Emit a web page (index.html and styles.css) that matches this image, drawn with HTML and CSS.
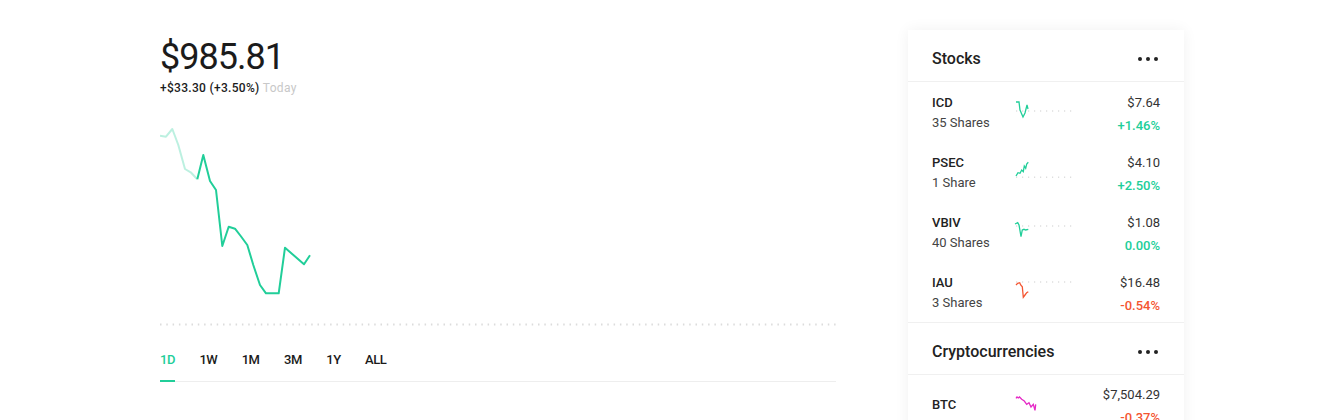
FILE: index.html
```html
<!DOCTYPE html>
<html lang="en">
<head>
    <meta charset="UTF-8">
    <meta name="viewport" content="width=device-width, initial-scale=1.0">
    <title>Portfolio</title>
    <link rel="stylesheet" href="styles.css">
</head>
<body>
    <div class="page">
        <div class="main">
            <h1 class="balance">$985.81</h1>
            <p class="change">+$33.30 (+3.50%) <span class="muted">Today</span></p>

            <svg class="chart" width="676" height="230" viewBox="0 0 676 230">
                <polyline fill="none" stroke="#21ce99" stroke-opacity="0.3" stroke-width="2" stroke-linejoin="round"
                    points="0,39.7 6,40.7 12.3,33 18.3,49 25,73 30.7,76.3 37.3,83.3" />
                <polyline fill="none" stroke="#21ce99" stroke-width="2" stroke-linejoin="round"
                    points="37.3,83.3 43.3,59 50,85 56,94 62.3,150 68.7,130.7 75,132.7 80.7,140 87.3,149 93.3,169 100,189 106,197.3 118.7,197.3 125,151.7 144,168.3 150,159.3" />
                <line x1="0" y1="228.5" x2="676" y2="228.5" stroke="#dcdcdc" stroke-width="2" stroke-dasharray="1.5 4.8" />
            </svg>

            <div class="tabs">
                <span class="tab active">1D</span>
                <span class="tab">1W</span>
                <span class="tab">1M</span>
                <span class="tab">3M</span>
                <span class="tab">1Y</span>
                <span class="tab">ALL</span>
            </div>
        </div>

        <div class="sidebar">
            <div class="card-head">
                <span>Stocks</span>
                <svg width="22" height="4" viewBox="0 0 22 4"><circle cx="2" cy="2" r="2" fill="#222"/><circle cx="10" cy="2" r="2" fill="#222"/><circle cx="18" cy="2" r="2" fill="#222"/></svg>
            </div>
            <div class="list">
                <div class="row">
                    <div class="name">
                        <div class="ticker">ICD</div>
                        <div class="shares">35 Shares</div>
                    </div>
                    <svg class="spark" width="60" height="24" viewBox="0 0 60 24">
                        <line x1="2" y1="15" x2="60" y2="15" stroke="#dedede" stroke-width="1.5" stroke-dasharray="1.2 4.8" />
                        <polyline fill="none" stroke="#21ce99" stroke-width="1.3" points="2,6 5,6 6,14 9,21 11,17 13,9 14,13" />
                    </svg>
                    <div class="quote">
                        <div class="price">$7.64</div>
                        <div class="pct up">+1.46%</div>
                    </div>
                </div>
                <div class="row">
                    <div class="name">
                        <div class="ticker">PSEC</div>
                        <div class="shares">1 Share</div>
                    </div>
                    <svg class="spark" width="60" height="24" viewBox="0 0 60 24">
                        <line x1="2" y1="21.3" x2="60" y2="21.3" stroke="#dedede" stroke-width="1.5" stroke-dasharray="1.2 4.8" />
                        <polyline fill="none" stroke="#21ce99" stroke-width="1.3" points="2,20 4,16.7 6,17.3 7.7,14 9.3,15.7 10.3,10 11.7,12.3 12.7,8 14.3,6.3" />
                    </svg>
                    <div class="quote">
                        <div class="price">$4.10</div>
                        <div class="pct up">+2.50%</div>
                    </div>
                </div>
                <div class="row">
                    <div class="name">
                        <div class="ticker">VBIV</div>
                        <div class="shares">40 Shares</div>
                    </div>
                    <svg class="spark" width="60" height="24" viewBox="0 0 60 24">
                        <line x1="2" y1="10" x2="60" y2="10" stroke="#dedede" stroke-width="1.5" stroke-dasharray="1.2 4.8" />
                        <polyline fill="none" stroke="#21ce99" stroke-width="1.3" points="1,8 3.7,6.7 5,9 7,20.7 8.3,14 10,13.3 11.7,14 14.3,13.3" />
                    </svg>
                    <div class="quote">
                        <div class="price">$1.08</div>
                        <div class="pct up">0.00%</div>
                    </div>
                </div>
                <div class="row">
                    <div class="name">
                        <div class="ticker">IAU</div>
                        <div class="shares">3 Shares</div>
                    </div>
                    <svg class="spark" width="60" height="24" viewBox="0 0 60 24">
                        <line x1="2" y1="6" x2="60" y2="6" stroke="#dedede" stroke-width="1.5" stroke-dasharray="1.2 4.8" />
                        <polyline fill="none" stroke="#f45531" stroke-width="1.3" points="2,9 3.7,7.3 5.7,6.7 6.7,9 8.3,10.7 9.3,21.3 11,19 12.7,16.7 14.3,15.7" />
                    </svg>
                    <div class="quote">
                        <div class="price">$16.48</div>
                        <div class="pct down">-0.54%</div>
                    </div>
                </div>
            </div>

            <div class="card-head">
                <span>Cryptocurrencies</span>
                <svg width="22" height="4" viewBox="0 0 22 4"><circle cx="2" cy="2" r="2" fill="#222"/><circle cx="10" cy="2" r="2" fill="#222"/><circle cx="18" cy="2" r="2" fill="#222"/></svg>
            </div>
            <div class="list">
                <div class="row single">
                    <div class="name">
                        <div class="ticker">BTC</div>
                    </div>
                    <svg class="spark" width="60" height="24" viewBox="0 0 60 24">
                        <polyline fill="none" stroke="#e52bc6" stroke-width="1.3" points="2,5.3 3,4 4.3,5 5.5,4 7.7,6.3 10.3,8 12.7,11.3 15,9.7 17,14 19.3,11.3 21,17.3 21.7,11.3" />
                    </svg>
                    <div class="quote">
                        <div class="price">$7,504.29</div>
                        <div class="pct down">-0.37%</div>
                    </div>
                </div>
            </div>
        </div>
    </div>
</body>
</html>
```

FILE: styles.css
```css
body {
    font-family: 'Roboto', 'Liberation Sans', sans-serif;
    margin: 0;
    padding: 0;
    background-color: #ffffff;
    color: #1b1b1b;
    overflow: hidden;
}
.page {
    display: flex;
    justify-content: center;
    gap: 72px;
}
.main {
    width: 676px;
}
.balance {
    margin: 39px 0 0;
    font-size: 36px;
    line-height: 36px;
    font-weight: 400;
    letter-spacing: -1px;
}
.change {
    margin: 5px 0 0;
    font-size: 12px;
    line-height: 16px;
    font-weight: 500;
    letter-spacing: 0.3px;
}
.muted {
    color: #c8c8c8;
    font-weight: 400;
}
.chart {
    display: block;
}
.tabs {
    display: flex;
    gap: 24.5px;
    margin-top: 24px;
    border-bottom: 1px solid #eeeeee;
}
.tab {
    font-size: 13px;
    line-height: 20px;
    font-weight: 500;
    letter-spacing: -0.5px;
    padding-bottom: 10px;
    margin-bottom: -1px;
    border-bottom: 2px solid transparent;
}
.tab.active {
    color: #21ce99;
    border-bottom-color: #21ce99;
}
.sidebar {
    width: 276px;
    margin-top: 30px;
    background-color: #ffffff;
    box-shadow: 0 0 14px rgba(0, 0, 0, 0.06);
    height: 420px;
}
.card-head {
    display: flex;
    justify-content: space-between;
    align-items: center;
    padding: 19px 24px 12px;
    font-size: 16px;
    line-height: 20px;
    font-weight: 500;
    color: #222222;
    border-bottom: 1px solid #f0f0f0;
}
.list {
    border-bottom: 1px solid #f0f0f0;
}
.row {
    display: flex;
    align-items: flex-start;
    padding: 11px 24px 6px;
    font-size: 13px;
    line-height: 20px;
}
.row.single {
    align-items: center;
    padding-top: 10px;
}
.row.single .ticker {
    margin-top: -4px;
}
.name {
    width: 82px;
}
.ticker {
    font-weight: 500;
    color: #222222;
}
.shares {
    color: #444444;
}
.spark {
    display: block;
    margin-top: 3px;
}
.row.single .spark {
    margin-top: -4px;
}
.quote {
    flex: 1;
    text-align: right;
}
.price {
    color: #333333;
}
.pct {
    margin-top: 3px;
    font-weight: 500;
}
.up {
    color: #21ce99;
}
.down {
    color: #f45531;
}
```
